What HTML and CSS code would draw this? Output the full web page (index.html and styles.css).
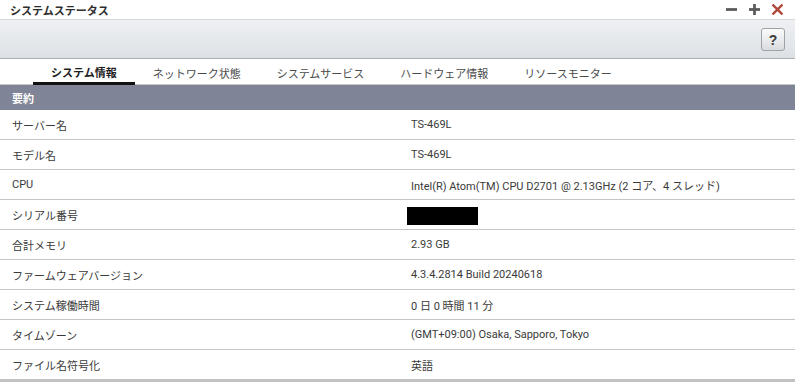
FILE: index.html
```html
<!DOCTYPE html>
<html lang="ja">
<head>
<meta charset="utf-8">
<link rel="stylesheet" href="styles.css">
</head>
<body>
<div class="window">
  <div class="titlebar">
    <span class="title">システムステータス</span>
    <div class="controls">
      <svg class="ctl" width="11" height="11" viewBox="0 0 12 12"><rect x="0" y="4.5" width="12" height="3" fill="#5a5a5a"/></svg>
      <svg class="ctl" width="11" height="11" viewBox="0 0 12 12"><rect x="0" y="4.5" width="12" height="3" fill="#5a5a5a"/><rect x="4.5" y="0" width="3" height="12" fill="#5a5a5a"/></svg>
      <svg class="ctl" width="11" height="11" viewBox="0 0 12 12"><path d="M1.5 1.5 L10.5 10.5 M10.5 1.5 L1.5 10.5" stroke="#b0493c" stroke-width="2.6" stroke-linecap="square"/></svg>
    </div>
  </div>
  <div class="toolbar">
    <button class="help">?</button>
  </div>
  <div class="tabs">
    <div class="tab active">システム情報</div>
    <div class="tab">ネットワーク状態</div>
    <div class="tab">システムサービス</div>
    <div class="tab">ハードウェア情報</div>
    <div class="tab">リソースモニター</div>
  </div>
  <div class="section">要約</div>
  <div class="table">
    <div class="row"><div class="label">サーバー名</div><div class="value">TS-469L</div></div>
    <div class="row"><div class="label">モデル名</div><div class="value">TS-469L</div></div>
    <div class="row"><div class="label">CPU</div><div class="value">Intel(R) Atom(TM) CPU D2701 @ 2.13GHz (2 コア、4 スレッド)</div></div>
    <div class="row"><div class="label">シリアル番号</div><div class="value"><span class="redact"></span></div></div>
    <div class="row"><div class="label">合計メモリ</div><div class="value">2.93 GB</div></div>
    <div class="row"><div class="label">ファームウェアバージョン</div><div class="value">4.3.4.2814 Build 20240618</div></div>
    <div class="row"><div class="label">システム稼働時間</div><div class="value">0 日 0 時間 11 分</div></div>
    <div class="row"><div class="label">タイムゾーン</div><div class="value">(GMT+09:00) Osaka, Sapporo, Tokyo</div></div>
    <div class="row last"><div class="label">ファイル名符号化</div><div class="value">英語</div></div>
  </div>
</div>
</body>
</html>
```

FILE: styles.css
```css
* { box-sizing: border-box; }
html, body { margin: 0; padding: 0; background: #ffffff; }
body {
  font-family: Roboto, "Noto Sans CJK JP", sans-serif;
  font-size: 11px;
  color: #3a3a3a;
  width: 795px;
  height: 385px;
  overflow: hidden;
}
.titlebar {
  height: 19px;
  display: flex;
  align-items: center;
  justify-content: space-between;
  padding: 0 12px 0 10px;
}
.title {
  font-weight: bold;
  font-size: 11px;
  color: #2e2e2e;
}
.controls {
  display: flex;
  gap: 12px;
  align-items: center;
}
.ctl { display: block; }
.toolbar {
  height: 40px;
  border-top: 1px solid #d6d9dd;
  border-bottom: 1px solid #a9aeb4;
  background: linear-gradient(#eef0f2, #dde1e6);
  display: flex;
  align-items: center;
  justify-content: flex-end;
  padding-right: 10px;
}
.help {
  width: 24px;
  height: 23px;
  border: 1px solid #9ea3a8;
  border-radius: 3px;
  background: linear-gradient(#fbfbfb, #d9dcdf);
  font-family: "Liberation Sans", Arial, sans-serif;
  font-weight: bold;
  font-size: 14px;
  color: #3c3c3c;
  padding: 0;
  margin-top: 1px;
}
.tabs {
  display: flex;
  height: 26px;
  padding-left: 33px;
  border-bottom: 1px solid #c8c8c8;
}
.tab {
  padding: 0 18px;
  display: flex;
  align-items: center;
  color: #4a4a4a;
  font-size: 11px;
  position: relative;
  top: 1px;
}
.tab.active {
  font-weight: bold;
  color: #1e1e1e;
  border-bottom: 3px solid #111;
  padding-top: 2px;
}
.section {
  height: 25px;
  background: #7f8596;
  color: #ffffff;
  font-weight: bold;
  font-size: 11px;
  display: flex;
  align-items: center;
  padding-left: 12px;
}
.row {
  display: flex;
  height: 30px;
  align-items: center;
  border-bottom: 1px solid #c6c6c6;
}
.row.last { border-bottom: 3px solid #c2c2c2; height: 32px; }
.label { width: 411px; padding-left: 12px; }
.value { flex: 1; }
.redact {
  display: inline-block;
  width: 71px;
  height: 18px;
  background: #000;
  vertical-align: middle;
  margin-top: 2px;
  margin-left: -4px;
}
```
